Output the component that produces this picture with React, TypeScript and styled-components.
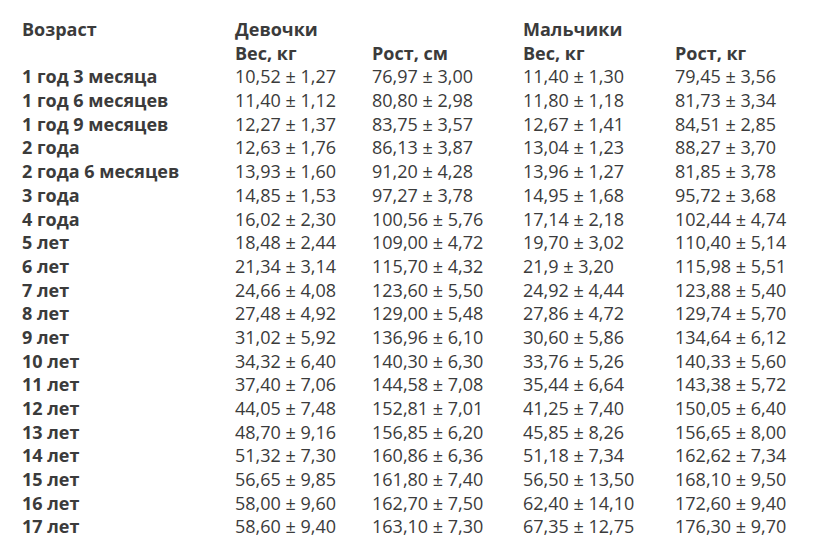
import React from "react";
import styled, { createGlobalStyle } from "styled-components";

const Global = createGlobalStyle`
  html, body { margin: 0; padding: 0; background: #fff; }
  body { font-family: "Open Sans", "Liberation Sans", sans-serif; color: #3b3b3b; }
`;

const Table = styled.div`
  display: grid;
  grid-template-columns: 213px 137px 151px 152px 1fr;
  grid-auto-rows: 23.7px;
  padding: 18px 0 0 22px;
  font-size: 18px;
  line-height: 23.7px;
`;

const Cell = styled.div<{ $bold?: boolean; $span?: number }>`
  font-weight: ${(p) => (p.$bold ? 700 : 400)};
  white-space: nowrap;
  grid-column: ${(p) => (p.$span ? `span ${p.$span}` : "auto")};
`;

const rows: [string, string, string, string, string][] = [
  ["1 год 3 месяца", "10,52 ± 1,27", "76,97 ± 3,00", "11,40 ± 1,30", "79,45 ± 3,56"],
  ["1 год 6 месяцев", "11,40 ± 1,12", "80,80 ± 2,98", "11,80 ± 1,18", "81,73 ± 3,34"],
  ["1 год 9 месяцев", "12,27 ± 1,37", "83,75 ± 3,57", "12,67 ± 1,41", "84,51 ± 2,85"],
  ["2 года", "12,63 ± 1,76", "86,13 ± 3,87", "13,04 ± 1,23", "88,27 ± 3,70"],
  ["2 года 6 месяцев", "13,93 ± 1,60", "91,20 ± 4,28", "13,96 ± 1,27", "81,85 ± 3,78"],
  ["3 года", "14,85 ± 1,53", "97,27 ± 3,78", "14,95 ± 1,68", "95,72 ± 3,68"],
  ["4 года", "16,02 ± 2,30", "100,56 ± 5,76", "17,14 ± 2,18", "102,44 ± 4,74"],
  ["5 лет", "18,48 ± 2,44", "109,00 ± 4,72", "19,70 ± 3,02", "110,40 ± 5,14"],
  ["6 лет", "21,34 ± 3,14", "115,70 ± 4,32", "21,9 ± 3,20", "115,98 ± 5,51"],
  ["7 лет", "24,66 ± 4,08", "123,60 ± 5,50", "24,92 ± 4,44", "123,88 ± 5,40"],
  ["8 лет", "27,48 ± 4,92", "129,00 ± 5,48", "27,86 ± 4,72", "129,74 ± 5,70"],
  ["9 лет", "31,02 ± 5,92", "136,96 ± 6,10", "30,60 ± 5,86", "134,64 ± 6,12"],
  ["10 лет", "34,32 ± 6,40", "140,30 ± 6,30", "33,76 ± 5,26", "140,33 ± 5,60"],
  ["11 лет", "37,40 ± 7,06", "144,58 ± 7,08", "35,44 ± 6,64", "143,38 ± 5,72"],
  ["12 лет", "44,05 ± 7,48", "152,81 ± 7,01", "41,25 ± 7,40", "150,05 ± 6,40"],
  ["13 лет", "48,70 ± 9,16", "156,85 ± 6,20", "45,85 ± 8,26", "156,65 ± 8,00"],
  ["14 лет", "51,32 ± 7,30", "160,86 ± 6,36", "51,18 ± 7,34", "162,62 ± 7,34"],
  ["15 лет", "56,65 ± 9,85", "161,80 ± 7,40", "56,50 ± 13,50", "168,10 ± 9,50"],
  ["16 лет", "58,00 ± 9,60", "162,70 ± 7,50", "62,40 ± 14,10", "172,60 ± 9,40"],
  ["17 лет", "58,60 ± 9,40", "163,10 ± 7,30", "67,35 ± 12,75", "176,30 ± 9,70"],
];

export default function App() {
  return (
    <>
      <Global />
      <Table>
        <Cell $bold>Возраст</Cell>
        <Cell $bold $span={2}>Девочки</Cell>
        <Cell $bold $span={2}>Мальчики</Cell>
        <Cell />
        <Cell $bold>Вес, кг</Cell>
        <Cell $bold>Рост, см</Cell>
        <Cell $bold>Вес, кг</Cell>
        <Cell $bold>Рост, кг</Cell>
        {rows.map((r) => (
          <React.Fragment key={r[0]}>
            <Cell $bold>{r[0]}</Cell>
            <Cell>{r[1]}</Cell>
            <Cell>{r[2]}</Cell>
            <Cell>{r[3]}</Cell>
            <Cell>{r[4]}</Cell>
          </React.Fragment>
        ))}
      </Table>
    </>
  );
}
